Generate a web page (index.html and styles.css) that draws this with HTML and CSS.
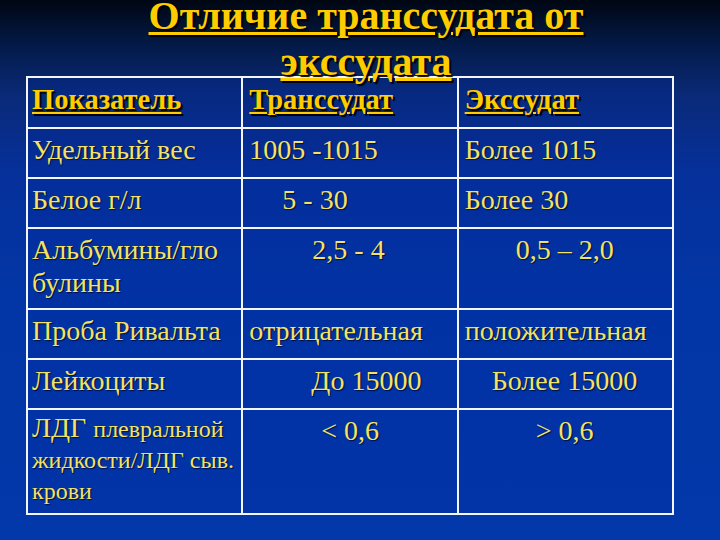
FILE: index.html
```html
<!DOCTYPE html>
<html lang="ru">
<head>
<meta charset="utf-8">
<title>Отличие транссудата от экссудата</title>
<link rel="stylesheet" href="styles.css">
</head>
<body>
<div class="slide">
  <h1 class="title"><span class="t1"><span class="u">Отличие транссудата от</span></span><span class="t2"><span class="u">экссудата</span></span></h1>
  <table class="grid">
    <tr class="r-head">
      <th>Показатель</th>
      <th>Транссудат</th>
      <th>Экссудат</th>
    </tr>
    <tr class="r-std">
      <td>Удельный вес</td>
      <td>1005 -1015</td>
      <td>Более 1015</td>
    </tr>
    <tr class="r-std">
      <td>Белое г/л</td>
      <td class="in-33">5 - 30</td>
      <td>Более 30</td>
    </tr>
    <tr class="r-tall">
      <td>Альбумины/гло булины</td>
      <td class="in-63">2,5 - 4</td>
      <td class="in-51">0,5 – 2,0</td>
    </tr>
    <tr class="r-std">
      <td>Проба Ривальта</td>
      <td>отрицательная</td>
      <td>положительная</td>
    </tr>
    <tr class="r-std">
      <td>Лейкоциты</td>
      <td class="in-62">До 15000</td>
      <td class="in-27">Более 15000</td>
    </tr>
    <tr class="r-last">
      <td class="ldg">ЛДГ <span class="small">плевральной жидкости/ЛДГ сыв. крови</span></td>
      <td class="in-72">&lt; 0,6</td>
      <td class="in-71">&gt; 0,6</td>
    </tr>
  </table>
</div>
</body>
</html>
```
FILE: styles.css
```css
html, body {
  margin: 0;
  padding: 0;
}
body {
  width: 720px;
  height: 540px;
  overflow: hidden;
  font-family: "Liberation Serif", "Times New Roman", serif;
  background: linear-gradient(to bottom, #000612 0px, #031a48 45px, #0a2a78 95px, #06309a 170px, #0236a6 300px, #0238aa 540px);
}
.slide {
  width: 720px;
  height: 540px;
}
.title {
  position: relative;
  z-index: 1;
  margin: 0;
  padding-left: 12px;
  height: 76px;
  text-align: center;
  font-size: 40px;
  font-weight: bold;
  color: #ffcc00;
  text-shadow: 2px 2px 1px #000;
}
.title .t1 {
  display: block;
  line-height: 31px;
}
.title .t2 {
  display: block;
  line-height: 61px;
}
.title .u {
  text-decoration: underline;
  text-decoration-thickness: 3px;
  text-underline-offset: 3px;
}
.grid {
  margin-left: 26px;
  width: 648px;
  border-collapse: collapse;
  table-layout: fixed;
  border: 2px solid #fff;
  background: rgba(0, 40, 160, 0.25);
}
.grid th, .grid td {
  border: 2px solid #f4f6ff;
  vertical-align: top;
  text-align: left;
  padding: 4px 4px 0 4px;
  font-size: 28px;
  line-height: 33px;
  color: #f4e266;
  text-shadow: 1px 1px 1px #001040;
  font-weight: normal;
}
.grid th + th, .grid td + td {
  padding-left: 6px;
}
.grid th {
  font-size: 28.5px;
  font-weight: bold;
  color: #ffcc00;
  text-decoration: underline;
  text-decoration-thickness: 2px;
  text-underline-offset: 3px;
  text-shadow: 2px 2px 1px #000;
  padding-top: 5px;
}
.r-head { height: 51px; }
.r-std { height: 50px; }
.r-tall { height: 81px; }
.r-last { height: 105px; }
.grid td.ldg {
  line-height: 29px;
  padding-top: 3px;
}
.small {
  font-size: 24px;
}
.grid td.in-27 { padding-left: 33px; }
.grid td.in-33 { padding-left: 39px; }
.grid td.in-51 { padding-left: 57px; }
.grid td.in-62 { padding-left: 68px; }
.grid td.in-63 { padding-left: 69px; }
.grid td.in-71 { padding-left: 77px; }
.grid td.in-72 { padding-left: 78px; }
```
